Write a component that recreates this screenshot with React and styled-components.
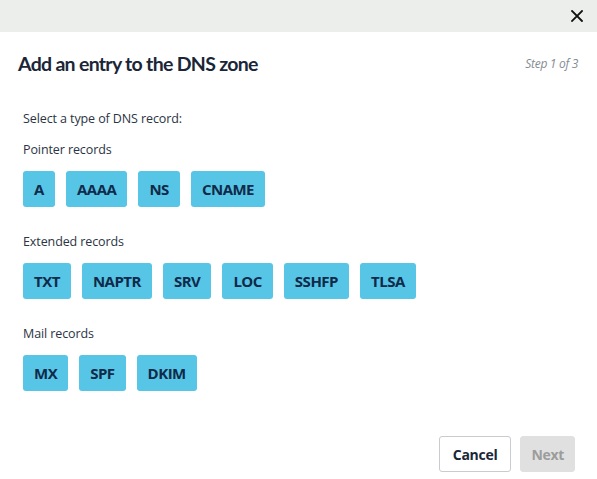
import React from "react";
import styled, { createGlobalStyle } from "styled-components";

const GlobalStyle = createGlobalStyle`
  html, body {
    margin: 0;
    padding: 0;
    background: #fff;
  }
  body {
    font-family: "Open Sans", "Noto Sans", sans-serif;
    color: #1c2b42;
  }
`;

const Modal = styled.div`
  width: 597px;
  height: 479px;
  display: flex;
  flex-direction: column;
  background: #fff;
`;

const TopBar = styled.div`
  height: 32px;
  flex-shrink: 0;
  background: #eceeec;
  display: flex;
  justify-content: flex-end;
  align-items: center;
  padding-right: 13px;
`;

const CloseButton = styled.button`
  border: none;
  background: none;
  padding: 0;
  width: 14px;
  height: 14px;
  display: flex;
  align-items: center;
  justify-content: center;
  cursor: pointer;
`;

const Header = styled.div`
  display: flex;
  justify-content: space-between;
  align-items: center;
  padding: 18px 19px 0 18px;
  height: 26px;
`;

const Title = styled.h2`
  margin: 0;
  font-family: "Lato", "Open Sans", sans-serif;
  font-size: 19.5px;
  font-weight: 700;
  letter-spacing: -0.7px;
  color: #1a2638;
`;

const Step = styled.span`
  font-size: 12px;
  font-style: italic;
  color: #858b92;
  letter-spacing: -0.3px;
`;

const Body = styled.div`
  padding: 34px 23px 0 23px;
  flex: 1;
`;

const Intro = styled.p`
  margin: 0 0 13px;
  font-size: 12.5px;
  line-height: 18px;
  color: #2b3444;
  letter-spacing: -0.1px;
`;

const Group = styled.div`
  margin-bottom: 26px;
`;

const GroupLabel = styled.div`
  font-size: 12.5px;
  line-height: 18px;
  color: #2b3444;
  margin-bottom: 12px;
  letter-spacing: -0.1px;
`;

const Options = styled.div`
  display: flex;
  gap: 11px;
`;

const RecordButton = styled.button`
  height: 36px;
  padding: 0 11px;
  min-width: 32px;
  border: none;
  border-radius: 3px;
  background: #57c5e5;
  color: #0f2a4a;
  font-family: "Open Sans", "Noto Sans", sans-serif;
  font-size: 15px;
  font-weight: 700;
  letter-spacing: -0.5px;
  cursor: pointer;
`;

const Footer = styled.div`
  display: flex;
  justify-content: flex-end;
  gap: 9px;
  padding: 0 22px 7px 0;
`;

const FooterButton = styled.button`
  height: 36px;
  padding: 0 ${(p) => (p.$disabled ? "10px" : "13px")};
  border-radius: 3px;
  font-family: "Open Sans", "Noto Sans", sans-serif;
  font-size: 14px;
  font-weight: 700;
  letter-spacing: -0.3px;
  border: 1px solid ${(p) => (p.$disabled ? "#e0e0e0" : "#c8cbcf")};
  background: ${(p) => (p.$disabled ? "#e0e0e0" : "#fff")};
  color: ${(p) => (p.$disabled ? "#9c9c9c" : "#1a2638")};
  cursor: ${(p) => (p.$disabled ? "default" : "pointer")};
`;

const groups = [
  { label: "Pointer records", types: ["A", "AAAA", "NS", "CNAME"] },
  {
    label: "Extended records",
    types: ["TXT", "NAPTR", "SRV", "LOC", "SSHFP", "TLSA"],
  },
  { label: "Mail records", types: ["MX", "SPF", "DKIM"] },
];

const App = () => {
  return (
    <>
      <GlobalStyle />
      <Modal>
        <TopBar>
          <CloseButton aria-label="Close">
            <svg width="12" height="12" viewBox="0 0 12 12">
              <path
                d="M1 1 L11 11 M11 1 L1 11"
                stroke="#111"
                strokeWidth="1.8"
                strokeLinecap="square"
              />
            </svg>
          </CloseButton>
        </TopBar>
        <Header>
          <Title>Add an entry to the DNS zone</Title>
          <Step>Step 1 of 3</Step>
        </Header>
        <Body>
          <Intro>Select a type of DNS record:</Intro>
          {groups.map((group) => (
            <Group key={group.label}>
              <GroupLabel>{group.label}</GroupLabel>
              <Options>
                {group.types.map((type) => (
                  <RecordButton key={type}>{type}</RecordButton>
                ))}
              </Options>
            </Group>
          ))}
        </Body>
        <Footer>
          <FooterButton>Cancel</FooterButton>
          <FooterButton $disabled disabled>
            Next
          </FooterButton>
        </Footer>
      </Modal>
    </>
  );
};

export default App;
